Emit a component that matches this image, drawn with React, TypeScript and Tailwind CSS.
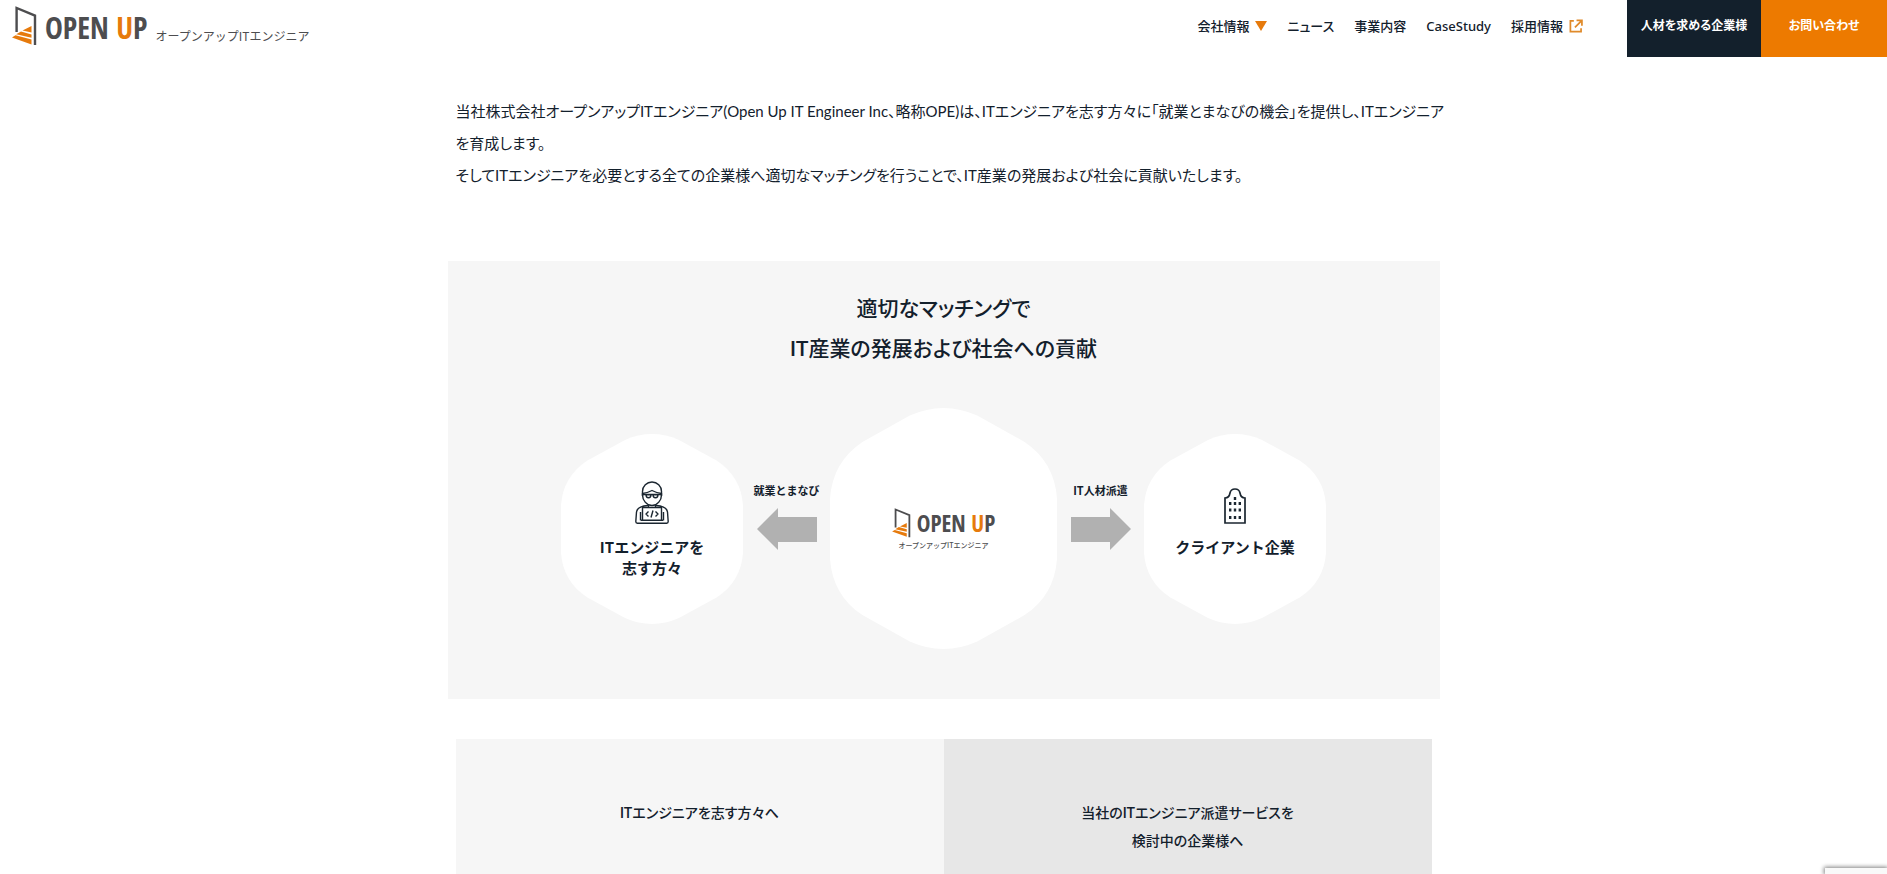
import React from 'react';

const navLinks = [
  { label: '会社情報', icon: 'down' },
  { label: 'ニュース' },
  { label: '事業内容' },
  { label: 'CaseStudy' },
  { label: '採用情報', icon: 'external' },
];

function DoorMark({ className }: { className: string }) {
  return (
    <svg viewBox="0 0 25 40" className={className} aria-hidden="true">
      <path d="M4.6 26V2L23 9.6V39" fill="none" stroke="#4d4d4f" strokeWidth="2.4" />
      <path d="M19.5 20v6.4L10.5 24.6z" fill="#e67a0c" />
      <path d="M9 25.4l10.5 3v3.4L4.2 28.2z" fill="#e67a0c" />
      <path d="M3.5 29.2l16 4.4v4.8L0 31.4z" fill="#e67a0c" />
    </svg>
  );
}

function NavIcon({ name }: { name?: string }) {
  if (name === 'down') {
    return (
      <svg viewBox="0 0 12 10" className="w-3 h-2.5" aria-hidden="true">
        <path d="M0 0h12L6 10z" fill="#e67a0c" />
      </svg>
    );
  }
  if (name === 'external') {
    return (
      <svg viewBox="0 0 13 13" className="w-3.5 h-3.5" fill="none" stroke="#e08a2a" strokeWidth="1.6" aria-hidden="true">
        <path d="M4.5 1.8H1.3v10h9.9V8.5" />
        <path d="M7 1.3h5v5M12 1.3L5.5 7.8" />
      </svg>
    );
  }
  return null;
}

function Hexagon({ className, children }: { className: string; children: React.ReactNode }) {
  return (
    <div className={`relative shrink-0 ${className}`}>
      <svg viewBox="0 0 182 192" preserveAspectRatio="none" className="absolute inset-0 w-full h-full" aria-hidden="true">
        <path
          d="M64 6Q91-6 118 6L156 27Q180 43 182 72V120Q180 149 156 165L118 186Q91 198 64 186L26 165Q2 149 0 120V72Q2 43 26 27Z"
          fill="#fff"
        />
      </svg>
      <div className="relative h-full flex flex-col items-center">{children}</div>
    </div>
  );
}

function Arrow({ label, left }: { label: string; left?: boolean }) {
  return (
    <div className="w-[87px] shrink-0 flex flex-col items-center gap-2 pb-7">
      <span className="text-[11px] leading-5 font-bold whitespace-nowrap">{label}</span>
      <svg viewBox="0 0 60 42" className="w-[60px] h-[42px]" aria-hidden="true">
        <path d={left ? 'M0 21L21 0v9h39v25H21v8z' : 'M60 21L39 0v9H0v25h39v8z'} fill="#b1b1b1" />
      </svg>
    </div>
  );
}

function EngineerIcon() {
  return (
    <svg viewBox="0 0 34 43" className="w-[34px] h-[43px]" fill="none" stroke="#1b2630" strokeWidth="1.4" strokeLinejoin="round" aria-hidden="true">
      <path d="M7.5 15V10.500a9.500 9.500 0 0 1 19 0V15" />
      <path d="M7.5 14v-1.500c3-.3 6-1.200 9.500-3 3.500 1.800 6.500 2.700 9.500 3V14c0 5-4 10.500-9.500 10.500S7.500 19 7.500 14z" />
      <path d="M8 13.5h18M11 13.800h5c0 4-5 4-5 0zM18 13.800h5c0 4-5 4-5 0z" />
      <path d="M13.5 23.500v2.500M20.500 23.500v2.500" />
      <path d="M13 24.5C6 25 2 27 1.500 31L.8 40.500c0 1 .5 1.700 1.500 1.700h29.400c1 0 1.500-.7 1.500-1.700L32.500 31c-.5-4-4.500-6-11.500-6.500" />
      <path d="M7.5 39V26.500h19V39M5.500 31v8.500M28.500 31v8.500M6 39.200h22" />
      <path d="M13.5 30.500L11 33l2.500 2.500M20.500 30.500L23 33l-2.500 2.500M18 29.500l-2 7" />
    </svg>
  );
}

function BuildingIcon() {
  return (
    <svg viewBox="0 0 22 36" className="w-[22px] h-9" aria-hidden="true">
      <path d="M1 35V10c3.5 0 4.500-2 5-5 .5-2.500 2-4 5-4s4.500 1.500 5 4c.5 3 1.500 5 5 5v25z" fill="none" stroke="#1b2630" strokeWidth="1.7" />
      <path
        d="M9.800 9h2.400v3H9.800zM5 14h2.400v3H5zM9.800 14h2.400v3H9.800zM14.600 14H17v3h-2.400zM5 20.500h2.400v3H5zM9.800 20.500h2.400v3H9.800zM14.600 20.500H17v3h-2.400zM5 28h2.400v3H5zM9.800 28h2.400v3H9.800zM14.600 28H17v3h-2.400z"
        fill="#1b2630"
      />
    </svg>
  );
}

export default function App() {
  return (
    <div
      lang="ja"
      className="min-h-screen flex flex-col bg-white text-[#13202c] font-['Roboto','Noto_Sans_CJK_JP',sans-serif] [font-feature-settings:'palt']"
    >
      <header className="flex items-start justify-between">
        <a href="#" className="flex items-start pl-3 pt-1.5">
          <DoorMark className="w-[25px] h-10" />
          <span className="pl-2 pt-1 text-3xl leading-9 font-semibold text-[#4d4d4f] font-['Open_Sans_Condensed','Roboto_Condensed','Liberation_Sans_Narrow',sans-serif]">
            OPEN <span className="text-[#e67a0c]">U</span>P
          </span>
          <span className="pl-2 pt-5 text-xs leading-5 text-[#4d4d4f] font-['Noto_Sans_CJK_JP',sans-serif] [font-feature-settings:normal]">
            オープンアップITエンジニア
          </span>
        </a>
        <div className="flex items-start">
          <nav className="flex gap-5 pt-3.5 pr-11 font-['Noto_Sans','Noto_Sans_CJK_JP',sans-serif]">
            {navLinks.map((link) => (
              <a key={link.label} href="#" className="flex items-center gap-1.5 text-[13px] leading-6 font-medium whitespace-nowrap">
                {link.label}
                <NavIcon name={link.icon} />
              </a>
            ))}
          </nav>
          <a href="#" className="w-[134px] h-[57px] pb-1.5 flex items-center justify-center bg-[#13202c] text-xs font-bold text-white">
            人材を求める企業様
          </a>
          <a href="#" className="w-[126px] h-[57px] pb-1.5 flex items-center justify-center bg-[#ed7a00] text-xs font-bold text-white">
            お問い合わせ
          </a>
        </div>
      </header>

      <main className="w-full max-w-[992px] mx-auto flex-1 flex flex-col">
        <p className="px-2 pt-[38px] text-[15px] leading-8 xl:whitespace-nowrap font-['Lato','Noto_Sans_CJK_JP',sans-serif]">
          当社株式会社オープンアップITエンジニア(Open Up IT Engineer Inc、略称OPE)は、ITエンジニアを志す方々に「就業とまなびの機会」を提供し、ITエンジニア
          <br />
          を育成します。
          <br />
          そしてITエンジニアを必要とする全ての企業様へ適切なマッチングを行うことで、IT産業の発展および社会に貢献いたします。
        </p>

        <section className="mt-[70px] pt-7 pb-[50px] bg-[#f6f6f6]">
          <h2 className="text-[21px] leading-10 font-medium text-center">
            適切なマッチングで
            <br />
            IT産業の発展および社会への貢献
          </h2>
          <div className="mt-[39px] flex items-center justify-center font-['Noto_Sans_CJK_JP',sans-serif] [font-feature-settings:normal]">
            <Hexagon className="w-[182px] h-[190px]">
              <div className="mt-[46px] h-11 flex items-end">
                <EngineerIcon />
              </div>
              <p className="mt-3 text-[15px] leading-[21px] font-bold text-center">
                ITエンジニアを
                <br />
                志す方々
              </p>
            </Hexagon>
            <Arrow label="就業とまなび" left />
            <Hexagon className="w-[227px] h-[241px]">
              <div className="h-full flex flex-col items-center justify-center">
                <div className="flex items-center gap-1.5">
                  <DoorMark className="w-[19px] h-[30px]" />
                  <span className="text-[23px] leading-8 font-semibold text-[#4d4d4f] font-['Open_Sans_Condensed','Roboto_Condensed','Liberation_Sans_Narrow',sans-serif]">
                    OPEN <span className="text-[#e67a0c]">U</span>P
                  </span>
                </div>
                <span className="text-[7px] leading-3 font-medium text-[#4d4d4f]">オープンアップITエンジニア</span>
              </div>
            </Hexagon>
            <Arrow label="IT人材派遣" />
            <Hexagon className="w-[182px] h-[190px]">
              <div className="mt-[46px] h-11 flex items-end">
                <BuildingIcon />
              </div>
              <p className="mt-3 text-[15px] leading-[21px] font-bold text-center">クライアント企業</p>
            </Hexagon>
          </div>
        </section>

        <section className="mt-10 px-2 flex-1 grid grid-cols-2 text-[14px] leading-7 font-medium text-center">
          <h3 className="pt-[60px] pb-4 bg-[#f6f6f6]">ITエンジニアを志す方々へ</h3>
          <h3 className="pt-[60px] pb-4 bg-[#e7e7e7]">
            当社のITエンジニア派遣サービスを
            <br />
            検討中の企業様へ
          </h3>
        </section>
      </main>

      <div className="fixed right-0 bottom-0 w-[62px] h-1.5 bg-[#f9f9f9] shadow-[0_0_4px_1px_#808080]" />
    </div>
  );
}
